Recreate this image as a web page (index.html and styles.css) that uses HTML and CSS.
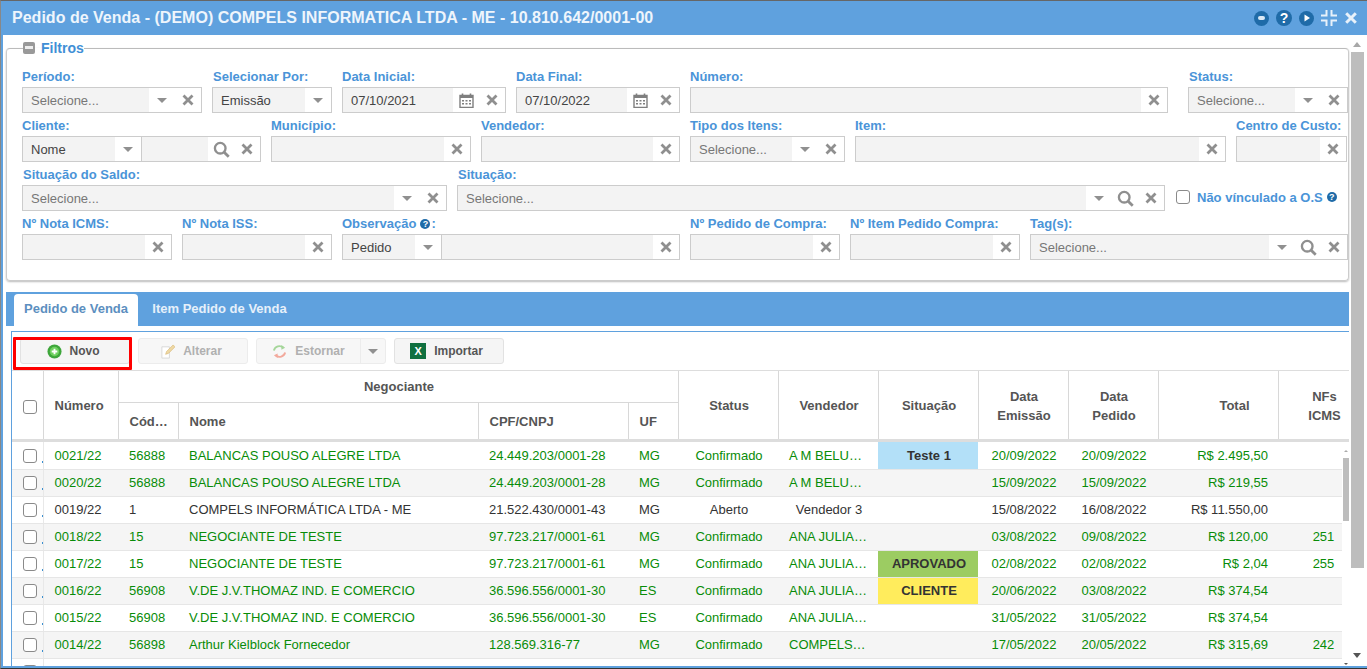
FILE: index.html
```html
<!DOCTYPE html>
<html lang="pt-BR">
<head>
<meta charset="utf-8">
<title>Pedido de Venda</title>
<link rel="stylesheet" href="styles.css">
</head>
<body>
<svg class="defs" aria-hidden="true">
  <symbol id="x" viewBox="0 0 12 12"><path d="M1.500 1.500l9 9M10.500 1.500l-9 9" fill="none" stroke="currentColor" stroke-width="2.800"/></symbol>
  <symbol id="caret" viewBox="0 0 12 12"><path d="M1 4h10l-5 5z" fill="currentColor"/></symbol>
  <symbol id="mag" viewBox="0 0 16 16"><circle cx="6.800" cy="6.800" r="5" fill="none" stroke="currentColor" stroke-width="2.200"/><path d="M10.500 10.500l4.300 4.300" stroke="currentColor" stroke-width="2.600" fill="none"/></symbol>
  <symbol id="cal" viewBox="0 0 15 15"><path d="M1 2.500h13v12H1z" fill="none" stroke="currentColor" stroke-width="1.400"/><path d="M1 2h13v3H1z" fill="currentColor"/><path d="M3.500 0.500v3M11.500 0.500v3" stroke="currentColor" stroke-width="1.600"/><path d="M3 7h2v1.500H3zM6.500 7h2v1.500h-2zM10 7h2v1.500h-2zM3 10h2v1.500H3zM6.500 10h2v1.500h-2zM10 10h2v1.500h-2z" fill="currentColor"/></symbol>
</svg>
<div class="win">
  <header class="titlebar">
    <h1 class="title">Pedido de Venda - (DEMO) COMPELS INFORMATICA LTDA - ME - 10.810.642/0001-00</h1>
    <div class="tools">
      <span class="dot"><span class="pill"></span></span>
      <span class="dot big">?</span>
      <span class="dot"><svg class="play" viewBox="0 0 8 8"><path d="M1.500 0.500l5.500 3.500-5.500 3.500z" fill="#fff"/></svg></span>
      <svg class="compress" viewBox="0 0 16 16"><path d="M5.500 0v5.500H0M10.500 0v5.500H16M5.500 16v-5.500H0M10.500 16v-5.500H16" fill="none" stroke="#e8f1fa" stroke-width="2"/></svg>
      <svg class="close" viewBox="0 0 12 12"><path d="M1.200 1.200l9.600 9.600M10.800 1.200l-9.600 9.600" fill="none" stroke="#e8f1fa" stroke-width="3"/></svg>
    </div>
  </header>
  <div class="page">
    <main class="content">
      <fieldset class="filters">
        <legend class="legend"><span class="minus"></span>Filtros</legend>
        <div class="row">
          <div class="field w180"><label>Período:</label><div class="ctl"><span class="inp ph">Selecione...</span><span class="ic"><svg class="caret"><use href="#caret"/></svg></span><span class="ic"><svg class="xx"><use href="#x"/></svg></span></div></div>
          <div class="field w120"><label class="lab1">Selecionar Por:</label><div class="ctl"><span class="inp">Emissão</span><span class="ic"><svg class="caret"><use href="#caret"/></svg></span></div></div>
          <div class="field w164"><label>Data Inicial:</label><div class="ctl"><span class="inp">07/10/2021</span><span class="ic"><svg class="calx"><use href="#cal"/></svg></span><span class="ic"><svg class="xx"><use href="#x"/></svg></span></div></div>
          <div class="field w164"><label>Data Final:</label><div class="ctl"><span class="inp">07/10/2022</span><span class="ic"><svg class="calx"><use href="#cal"/></svg></span><span class="ic"><svg class="xx"><use href="#x"/></svg></span></div></div>
          <div class="field w478"><label>Número:</label><div class="ctl"><span class="inp"></span><span class="ic"><svg class="xx"><use href="#x"/></svg></span></div></div>
          <div class="field w160 push"><label class="lab1">Status:</label><div class="ctl"><span class="inp ph">Selecione...</span><span class="ic"><svg class="caret"><use href="#caret"/></svg></span><span class="ic"><svg class="xx"><use href="#x"/></svg></span></div></div>
        </div>
        <div class="row">
          <div class="field w239"><label>Cliente:</label><div class="ctl"><span class="inp sel">Nome</span><span class="ic sep"><svg class="caret"><use href="#caret"/></svg></span><span class="inp"></span><span class="ic"><svg class="mag"><use href="#mag"/></svg></span><span class="ic"><svg class="xx"><use href="#x"/></svg></span></div></div>
          <div class="field w200"><label>Município:</label><div class="ctl"><span class="inp"></span><span class="ic"><svg class="xx"><use href="#x"/></svg></span></div></div>
          <div class="field w199"><label>Vendedor:</label><div class="ctl"><span class="inp"></span><span class="ic"><svg class="xx"><use href="#x"/></svg></span></div></div>
          <div class="field w155"><label>Tipo dos Itens:</label><div class="ctl"><span class="inp ph">Selecione...</span><span class="ic"><svg class="caret"><use href="#caret"/></svg></span><span class="ic"><svg class="xx"><use href="#x"/></svg></span></div></div>
          <div class="field w371"><label>Item:</label><div class="ctl"><span class="inp"></span><span class="ic"><svg class="xx"><use href="#x"/></svg></span></div></div>
          <div class="field w111 push inset"><label>Centro de Custo:</label><div class="ctl"><span class="inp"></span><span class="ic"><svg class="xx"><use href="#x"/></svg></span></div></div>
        </div>
        <div class="row">
          <div class="field w425"><label class="lab1">Situação do Saldo:</label><div class="ctl"><span class="inp ph">Selecione...</span><span class="ic"><svg class="caret"><use href="#caret"/></svg></span><span class="ic"><svg class="xx"><use href="#x"/></svg></span></div></div>
          <div class="field w708"><label class="lab1">Situação:</label><div class="ctl"><span class="inp ph">Selecione...</span><span class="ic"><svg class="caret"><use href="#caret"/></svg></span><span class="ic"><svg class="mag"><use href="#mag"/></svg></span><span class="ic"><svg class="xx"><use href="#x"/></svg></span></div></div>
          <div class="vinc"><span class="box"></span><span class="vinc-t">Não vínculado a O.S</span><span class="help">?</span></div>
        </div>
        <div class="row">
          <div class="field w150"><label>Nº Nota ICMS:</label><div class="ctl"><span class="inp"></span><span class="ic"><svg class="xx"><use href="#x"/></svg></span></div></div>
          <div class="field w150"><label>Nº Nota ISS:</label><div class="ctl"><span class="inp"></span><span class="ic"><svg class="xx"><use href="#x"/></svg></span></div></div>
          <div class="field w338"><label>Observação<span class="help">?</span>:</label><div class="ctl"><span class="inp sel2">Pedido</span><span class="ic sep"><svg class="caret"><use href="#caret"/></svg></span><span class="inp"></span><span class="ic"><svg class="xx"><use href="#x"/></svg></span></div></div>
          <div class="field w150"><label>Nº Pedido de Compra:</label><div class="ctl"><span class="inp"></span><span class="ic"><svg class="xx"><use href="#x"/></svg></span></div></div>
          <div class="field w170"><label>Nº Item Pedido Compra:</label><div class="ctl"><span class="inp"></span><span class="ic"><svg class="xx"><use href="#x"/></svg></span></div></div>
          <div class="field w318"><label>Tag(s):</label><div class="ctl"><span class="inp ph">Selecione...</span><span class="ic"><svg class="caret"><use href="#caret"/></svg></span><span class="ic"><svg class="mag"><use href="#mag"/></svg></span><span class="ic"><svg class="xx"><use href="#x"/></svg></span></div></div>
        </div>
      </fieldset>

      <nav class="tabs">
        <span class="tab on">Pedido de Venda</span>
        <span class="tab">Item Pedido de Venda</span>
      </nav>

      <section class="panel">
        <div class="toolbar">
          <span class="btn novo"><svg class="bi" viewBox="0 0 16 16"><circle cx="8" cy="8" r="7.500" fill="#3da63a"/><circle cx="8" cy="8" r="5" fill="#6fd05f"/><path d="M8 5v6M5 8h6" stroke="#fff" stroke-width="2"/></svg>Novo</span>
          <span class="btn off"><svg class="bi" viewBox="0 0 16 16"><path d="M2 3h8v12H2z" fill="#fff" stroke="#d8d8d8"/><path d="M6 11l1-3 7-7 2 2-7 7z" fill="#efd9a4" stroke="#d9b878" stroke-width=".7"/></svg>Alterar</span>
          <span class="btn off split"><span class="split-main"><svg class="bi" viewBox="0 0 16 16"><path d="M2 7a6 6 0 0 1 10-3" fill="none" stroke="#a5d69a" stroke-width="2"/><path d="M10 1l4 3-4 2z" fill="#a5d69a"/><path d="M14 9a6 6 0 0 1-10 3" fill="none" stroke="#f2a99c" stroke-width="2"/><path d="M6 15l-4-3 4-2z" fill="#f2a99c"/></svg>Estornar</span><span class="split-c"><svg class="caret"><use href="#caret"/></svg></span></span>
          <span class="btn imp"><span class="xl">X</span>Importar</span>
          <span class="redbox"></span>
        </div>
        <div class="thead-wrap">
          <table class="grid head">
            <colgroup><col class="c1"><col class="c2"><col class="c3"><col class="c4"><col class="c5"><col class="c6"><col class="c7"><col class="c8"><col class="c9"><col class="c10"><col class="c11"><col class="c12"><col class="c13"></colgroup>
            <thead>
              <tr class="h1">
                <th rowspan="2" class="hck"><span class="box"></span></th>
                <th rowspan="2" class="l">Número</th>
                <th colspan="4">Negociante</th>
                <th rowspan="2">Status</th>
                <th rowspan="2">Vendedor</th>
                <th rowspan="2">Situação</th>
                <th rowspan="2">Data<br>Emissão</th>
                <th rowspan="2">Data<br>Pedido</th>
                <th rowspan="2" class="tot">Total</th>
                <th rowspan="2">NFs<br>ICMS</th>
              </tr>
              <tr class="h2">
                <th class="l">Cód…</th>
                <th class="l">Nome</th>
                <th class="l">CPF/CNPJ</th>
                <th class="l">UF</th>
              </tr>
            </thead>
          </table>
        </div>
        <div class="tbody-wrap">
          <div class="rows">
            <table class="grid body">
              <colgroup><col class="c1"><col class="c2"><col class="c3"><col class="c4"><col class="c5"><col class="c6"><col class="c7"><col class="c8"><col class="c9"><col class="c10"><col class="c11"><col class="c12"><col class="c13"></colgroup>
              <tbody>
                <tr class="g"><td class="ck"><span class="box"></span></td><td>0021/22</td><td>56888</td><td>BALANCAS POUSO ALEGRE LTDA</td><td>24.449.203/0001-28</td><td>MG</td><td class="c">Confirmado</td><td class="v">A M BELU…</td><td class="tag blue">Teste 1</td><td class="c">20/09/2022</td><td class="c">20/09/2022</td><td class="r">R$ 2.495,50</td><td class="nf"></td></tr>
                <tr class="g"><td class="ck"><span class="box"></span></td><td>0020/22</td><td>56888</td><td>BALANCAS POUSO ALEGRE LTDA</td><td>24.449.203/0001-28</td><td>MG</td><td class="c">Confirmado</td><td class="v">A M BELU…</td><td></td><td class="c">15/09/2022</td><td class="c">15/09/2022</td><td class="r">R$ 219,55</td><td class="nf"></td></tr>
                <tr><td class="ck"><span class="box"></span></td><td>0019/22</td><td>1</td><td>COMPELS INFORMÁTICA LTDA - ME</td><td>21.522.430/0001-43</td><td>MG</td><td class="c">Aberto</td><td class="c">Vendedor 3</td><td></td><td class="c">15/08/2022</td><td class="c">16/08/2022</td><td class="r">R$ 11.550,00</td><td class="nf"></td></tr>
                <tr class="g"><td class="ck"><span class="box"></span></td><td>0018/22</td><td>15</td><td>NEGOCIANTE DE TESTE</td><td>97.723.217/0001-61</td><td>MG</td><td class="c">Confirmado</td><td class="v">ANA JULIA…</td><td></td><td class="c">03/08/2022</td><td class="c">09/08/2022</td><td class="r">R$ 120,00</td><td class="nf">251</td></tr>
                <tr class="g"><td class="ck"><span class="box"></span></td><td>0017/22</td><td>15</td><td>NEGOCIANTE DE TESTE</td><td>97.723.217/0001-61</td><td>MG</td><td class="c">Confirmado</td><td class="v">ANA JULIA…</td><td class="tag lime">APROVADO</td><td class="c">02/08/2022</td><td class="c">02/08/2022</td><td class="r">R$ 2,04</td><td class="nf">255</td></tr>
                <tr class="g"><td class="ck"><span class="box"></span></td><td>0016/22</td><td>56908</td><td>V.DE J.V.THOMAZ IND. E COMERCIO</td><td>36.596.556/0001-30</td><td>ES</td><td class="c">Confirmado</td><td class="v">ANA JULIA…</td><td class="tag yellow">CLIENTE</td><td class="c">20/06/2022</td><td class="c">03/08/2022</td><td class="r">R$ 374,54</td><td class="nf"></td></tr>
                <tr class="g"><td class="ck"><span class="box"></span></td><td>0015/22</td><td>56908</td><td>V.DE J.V.THOMAZ IND. E COMERCIO</td><td>36.596.556/0001-30</td><td>ES</td><td class="c">Confirmado</td><td class="v">ANA JULIA…</td><td></td><td class="c">31/05/2022</td><td class="c">31/05/2022</td><td class="r">R$ 374,54</td><td class="nf"></td></tr>
                <tr class="g"><td class="ck"><span class="box"></span></td><td>0014/22</td><td>56898</td><td>Arthur Kielblock Fornecedor</td><td>128.569.316-77</td><td>MG</td><td class="c">Confirmado</td><td class="v">COMPELS…</td><td></td><td class="c">17/05/2022</td><td class="c">20/05/2022</td><td class="r">R$ 315,69</td><td class="nf">242</td></tr>
                <tr class="g"><td class="ck"><span class="box"></span></td><td></td><td></td><td></td><td></td><td></td><td></td><td></td><td></td><td></td><td></td><td></td><td></td></tr>
              </tbody>
            </table>
          </div>
          <div class="mini"><span class="mini-up"></span><span class="mini-thumb"></span><span class="mini-dn"></span></div>
        </div>
      </section>
    </main>
    <aside class="vscroll"><span class="arr up"></span><span class="thumb"></span><span class="arr dn"></span></aside>
  </div>
</div>
</body>
</html>
```
FILE: styles.css
```css
* { box-sizing: border-box; }
html, body { margin: 0; height: 669px; overflow: hidden; background: #fff; }
body { font-family: "Liberation Sans", Arial, sans-serif; font-size: 13px; color: #444; }
.defs { position: absolute; width: 0; height: 0; }

.win { height: 669px; border-top: 1px solid #666; border-bottom: 1px solid #333; border-left: 1px solid #888; display: flex; flex-direction: column; }
.titlebar { height: 34px; flex: none; background: #5fa1de; display: flex; align-items: center; justify-content: space-between; padding: 0 10px 0 11px; }
.title { margin: 0; font-size: 16px; font-weight: bold; color: #eef5fc; white-space: nowrap; letter-spacing: .015px; }
.tools { display: flex; align-items: center; }
.dot { width: 15px; height: 15px; border-radius: 50%; background: #1f6ba8; color: #fff; display: flex; align-items: center; justify-content: center; margin-right: 7px; }
.dot.big { width: 16px; height: 16px; font-weight: bold; font-size: 14px; }
.pill { width: 7px; height: 4px; background: #dbe9f5; border-radius: 2px; }
.play { width: 8px; height: 8px; }
.compress { width: 16px; height: 16px; margin: 0 8px 0 0; }
.close { width: 12px; height: 12px; }

.page { flex: 1; min-height: 0; display: flex; border-left: 2px solid #5fa1de; border-bottom: 2px solid #5fa1de; }
.content { flex: 1; min-width: 0; padding-left: 3px; display: flex; flex-direction: column; }
.vscroll { width: 18px; flex: none; display: flex; flex-direction: column; align-items: stretch; padding-top: 7px; }
.arr { height: 0; width: 0; margin-left: 4px; border-left: 4px solid transparent; border-right: 4px solid transparent; }
.arr.up { border-bottom: 5px solid #a8a8a8; }
.arr.dn { border-top: 5px solid #555; margin-top: 85px; }
.thumb { height: 516px; margin: 5px 3px 0 2px; background: #bdbdbd; }

.filters { margin: 5px 0 0; height: 241px; padding: 0 0 0 15px; border: 1px solid #ccc; border-top-color: #bbb; border-radius: 4px; box-shadow: 0 1px 2px #bbb; min-width: 0; }
.legend { padding: 0; margin-left: 1px; font-size: 14px; font-weight: bold; color: #3f8fd6; display: flex; align-items: center; height: 16px; }
.minus { width: 12px; height: 12px; background: #999; border-radius: 2px; margin-right: 6px; position: relative; flex: none; }
.minus::after { content: ""; position: absolute; left: 2px; right: 2px; top: 4px; height: 3px; background: #eee; }
.row { display: flex; gap: 10px; align-items: flex-end; height: 49px; }
.row:first-of-type { margin-top: 8px; }
.field { display: flex; flex-direction: column; flex: none; }
.field label { height: 23px; line-height: 16px; padding-top: 5px; font-weight: bold; color: #4a94d8; white-space: nowrap; }
.field .lab1 { padding-left: 1px; }
.ctl { height: 26px; border: 1px solid #ccc; display: flex; background: #fff; }
.inp { flex: 1; min-width: 0; background: #f3f3f3; padding-left: 8px; line-height: 25px; color: #444; white-space: nowrap; }
.inp.ph { color: #777; }
.inp.sel { flex: none; width: 92px; }
.inp.sel2 { flex: none; width: 72px; }
.ic { width: 26px; flex: none; display: flex; align-items: center; justify-content: center; color: #8f8f8f; }
.ic.sep { border-right: 1px solid #ccc; width: 27px; }
.xx { width: 12px; height: 12px; }
.caret { width: 12px; height: 12px; color: #909090; }
.mag { width: 17px; height: 17px; }
.calx { width: 15px; height: 15px; color: #7f7f7f; }
.push { margin-left: auto; }
.inset { margin-right: 1px; }
.w111 { width: 111px; } .w120 { width: 120px; } .w150 { width: 150px; } .w155 { width: 155px; }
.w160 { width: 160px; } .w164 { width: 164px; } .w170 { width: 170px; } .w180 { width: 180px; }
.w199 { width: 199px; } .w200 { width: 200px; } .w239 { width: 239px; } .w318 { width: 318px; }
.w338 { width: 338px; } .w371 { width: 371px; } .w425 { width: 425px; } .w478 { width: 478px; } .w708 { width: 708px; }

.box { display: inline-block; width: 14px; height: 14px; border: 1px solid #8a8a8a; border-radius: 3px; background: #fff; vertical-align: middle; }
.vinc { display: flex; align-items: center; height: 26px; margin-left: 1px; padding-bottom: 2px; }
.vinc-t { font-weight: bold; color: #4a94d8; margin-left: 7px; white-space: nowrap; }
.help { display: inline-flex; width: 10px; height: 10px; border-radius: 50%; background: #1f6ba8; color: #fff; font-size: 9px; font-weight: bold; align-items: center; justify-content: center; margin: 0 1px 0 4px; vertical-align: 1px; }

.tabs { margin-top: 11px; height: 34px; flex: none; background: #5fa1de; display: flex; padding: 2px 0 0 8px; }
.tab { width: 124px; height: 32px; line-height: 30px; text-align: center; font-weight: bold; color: #e6f0fa; white-space: nowrap; }
.tab.on { background: #fff; color: #5c8fc0; border-radius: 4px 4px 0 0; }
.tab + .tab { width: 162px; padding-left: 1px; }

.panel { margin: 5px 0 0 5px; flex: 1; min-height: 0; border: 1px solid #5fa1de; border-bottom: 0; border-right: 0; display: flex; flex-direction: column; overflow: hidden; }
.toolbar { position: relative; height: 38px; flex: none; display: flex; padding: 6px 0 0 8px; gap: 8px; font-size: 12px; }
.btn { height: 26px; width: 110px; display: flex; align-items: center; justify-content: center; background: #f5f5f5; border: 1px solid #e2e2e2; border-radius: 3px; font-weight: bold; color: #555; flex: none; }
.novo { padding-right: 4px; }
.imp { padding-right: 5px; }
.btn.off { color: #b0b0b0; background: #f7f7f7; border-color: #ececec; padding-right: 4px; }
.bi { width: 15px; height: 15px; margin-right: 8px; flex: none; }
.xl { width: 16px; height: 16px; background: #107040; color: #fff; font-size: 11px; line-height: 16px; text-align: center; margin-right: 8px; flex: none; }
.split { width: 130px; justify-content: flex-start; padding-right: 0 !important; }
.split-main { width: 104px; height: 100%; display: flex; align-items: center; justify-content: center; border-right: 1px solid #ececec; }
.split-c { flex: 1; display: flex; align-items: center; justify-content: center; }
.redbox { position: absolute; left: 1px; top: 5px; width: 119px; height: 33px; border: 3px solid #f00; border-radius: 1px; }

.thead-wrap { overflow: hidden; flex: none; height: 72px; border-top: 1px solid #ddd; border-bottom: 3px solid #ddd; }
.grid { border-collapse: collapse; table-layout: fixed; width: 1357px; }
.c1 { width: 31px; } .c2 { width: 75px; } .c3 { width: 60px; } .c4 { width: 300px; } .c5 { width: 150px; } .c6 { width: 50px; }
.c7 { width: 100px; } .c8 { width: 100px; } .c9 { width: 100px; } .c10 { width: 90px; } .c11 { width: 90px; } .c12 { width: 120px; } .c13 { width: 91px; }
.head th { border-right: 1px solid #d8d8d8; border-bottom: 1px solid #d8d8d8; font-weight: bold; color: #555; text-align: center; line-height: 19px; padding: 0 9px 0 11px; }
.head .h1 th { height: 31px; }
.head .h2 th { height: 38px; border-bottom: 0; }
.head .h1 th[rowspan] { border-bottom: 0; }
.head th.l { text-align: left; }
.head th.hck { padding: 0 0 0 5px; }
.head th.tot { text-align: right; padding-right: 28px; }

.tbody-wrap { flex: 1; min-height: 0; display: flex; overflow: hidden; }
.rows { flex: 1; min-width: 0; overflow: hidden; }
.mini { width: 7px; flex: none; display: flex; flex-direction: column; align-items: center; padding-top: 8px; }
.mini-up { width: 0; height: 0; border-left: 2px solid transparent; border-right: 2px solid transparent; border-bottom: 2px solid #aaa; }
.mini-thumb { width: 6px; height: 63px; margin-top: 6px; background: #bdbdbd; }
.mini-dn { width: 0; height: 0; border-left: 2px solid transparent; border-right: 2px solid transparent; border-top: 2px solid #555; margin-top: 142px; }
.body td { height: 27px; padding: 0 9px 0 11px; border-bottom: 1px solid #e6e6e6; white-space: nowrap; overflow: hidden; color: #333; }
.body tr:nth-child(even) td { background: #f5f5f5; }
.body tr.g td { color: #088c08; }
.body td.ck { padding: 0 0 0 5px; text-align: center; border-right: 1px solid #e8e8e8; position: relative; }
.body td.ck::after { content: ""; position: absolute; right: 0; bottom: 6px; width: 1px; height: 2px; background: #3a8fd0; }
.body td.c { text-align: center; }
.body td.nf { text-align: center; padding: 0 10px; }
.body td.r { text-align: right; padding-right: 10px; }
.body td.v { text-align: left; }
.body td.tag { text-align: center; font-weight: bold; color: #333 !important; }
.body td.blue { background: #b3e0f8 !important; }
.body td.lime { background: #9ccc62 !important; }
.body td.yellow { background: #ffec5c !important; }
```
